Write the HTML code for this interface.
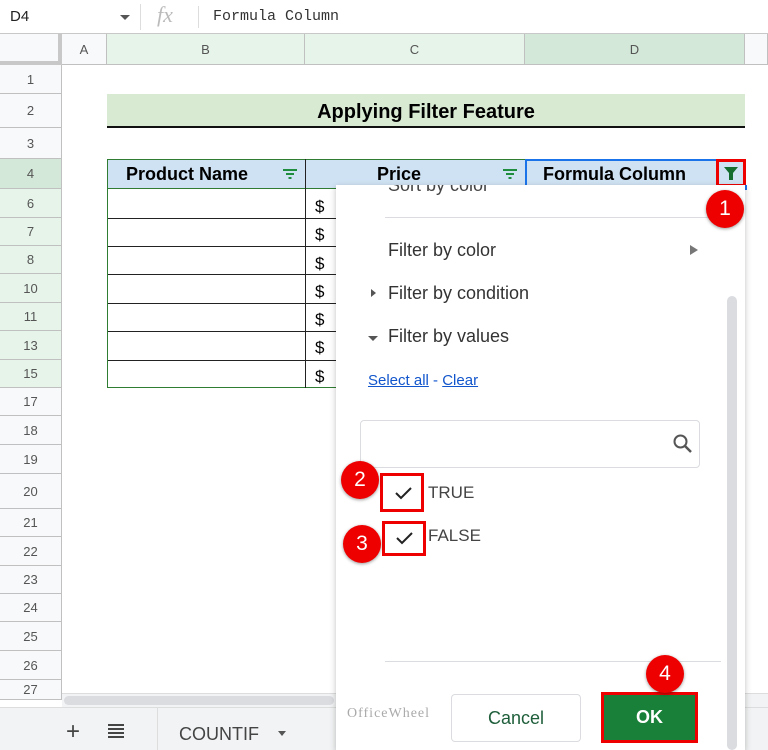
<!DOCTYPE html>
<html><head><style>
*{box-sizing:border-box;margin:0;padding:0}
body{width:768px;height:750px;overflow:hidden;background:#fff;font-family:"Liberation Sans",Arial,sans-serif;position:relative}
.a{position:absolute}
.rh{position:absolute;left:0;width:62px;background:#f8f9fa;border-bottom:1px solid #c0c0c0;border-right:1px solid #c0c0c0;color:#555;font-size:13px;display:flex;align-items:center;justify-content:center}
.ch{position:absolute;top:34px;height:31px;background:#f8f9fa;border-right:1px solid #c0c0c0;border-bottom:1px solid #c0c0c0;color:#555;font-size:13px;display:flex;align-items:center;justify-content:center}
.cell{position:absolute;border:1px solid #222;border-top:none;height:29px;font-size:16px;padding-left:8px;line-height:28px}
.badge{position:absolute;width:38px;height:38px;border-radius:50%;background:#e00;color:#fff;font-size:21px;display:flex;align-items:center;justify-content:center;box-shadow:0 1px 3px rgba(0,0,0,.4)}
.mi{position:absolute;left:388px;font-size:18px;color:#333}
</style></head><body>
<!-- formula bar -->
<div class="a" style="left:0;top:0;width:768px;height:34px;border-bottom:1px solid #c8c8c8;background:#fff"></div>
<div class="a" style="left:10px;top:8px;font-size:15px;color:#222">D4</div>
<div class="a" style="left:120px;top:15px;border-left:5px solid transparent;border-right:5px solid transparent;border-top:5px solid #555"></div>
<div class="a" style="left:140px;top:4px;width:1px;height:26px;background:#ddd"></div>
<div class="a" style="left:157px;top:2px;font-family:'Liberation Serif',serif;font-style:italic;font-size:22px;color:#bbb">fx</div>
<div class="a" style="left:198px;top:6px;width:1px;height:22px;background:#ddd"></div>
<div class="a" style="left:213px;top:8px;font-family:'Liberation Mono',monospace;font-size:15px;color:#333">Formula Column</div>
<!-- column headers -->
<div class="ch" style="left:0;width:62px;border-right:4px solid #c8c8c8;border-bottom:4px solid #c8c8c8"></div>
<div class="ch" style="left:62px;width:45px">A</div>
<div class="ch" style="left:107px;width:198px;background:#e6f4ea">B</div>
<div class="ch" style="left:305px;width:220px;background:#e6f4ea">C</div>
<div class="ch" style="left:525px;width:220px;background:#d3e8d9">D</div>
<div class="ch" style="left:745px;width:23px"></div>
<!-- row headers -->
<div class="rh" style="top:65px;height:29px">1</div>
<div class="rh" style="top:94px;height:34px">2</div>
<div class="rh" style="top:128px;height:31px">3</div>
<div class="rh" style="top:159px;height:30px;background:#d3e8d9">4</div>
<div class="rh" style="top:189px;height:29px;background:#e6f4ea">6</div>
<div class="rh" style="top:218px;height:28px;background:#e6f4ea">7</div>
<div class="rh" style="top:246px;height:28px;background:#e6f4ea">8</div>
<div class="rh" style="top:274px;height:29px;background:#e6f4ea">10</div>
<div class="rh" style="top:303px;height:28px;background:#e6f4ea">11</div>
<div class="rh" style="top:331px;height:29px;background:#e6f4ea">13</div>
<div class="rh" style="top:360px;height:28px;background:#e6f4ea">15</div>
<div class="rh" style="top:388px;height:28px">17</div>
<div class="rh" style="top:416px;height:29px">18</div>
<div class="rh" style="top:445px;height:29px">19</div>
<div class="rh" style="top:474px;height:35px">20</div>
<div class="rh" style="top:509px;height:28px">21</div>
<div class="rh" style="top:537px;height:29px">22</div>
<div class="rh" style="top:566px;height:28px">23</div>
<div class="rh" style="top:594px;height:28px">24</div>
<div class="rh" style="top:622px;height:29px">25</div>
<div class="rh" style="top:651px;height:29px">26</div>
<div class="rh" style="top:680px;height:20px">27</div>
<!-- title -->
<div class="a" style="left:107px;top:94px;width:638px;height:34px;background:#d9ead3;border-bottom:2px solid #111;text-align:center;font-weight:bold;font-size:20px;line-height:36px">Applying Filter Feature</div>
<!-- table header -->
<div class="a" style="left:107px;top:159px;width:638px;height:30px;background:#cfe2f3;border:1px solid #2e7d32"></div>
<div class="a" style="left:305px;top:159px;width:1px;height:30px;background:#222"></div>
<div class="a" style="left:525px;top:159px;width:220px;height:30px;border:2px solid #1a73e8"></div>
<div class="a" style="left:126px;top:164px;font-weight:bold;font-size:18px">Product Name</div>
<div class="a" style="left:377px;top:164px;font-weight:bold;font-size:18px">Price</div>
<div class="a" style="left:543px;top:164px;font-weight:bold;font-size:18px">Formula Column</div>
<svg class="a" style="left:282px;top:168px" width="16" height="12"><path d="M1 2H15M4 6H12M6.5 10H9.5" stroke="#1e8e3e" stroke-width="2"/></svg>
<svg class="a" style="left:502px;top:168px" width="16" height="12"><path d="M1 2H15M4 6H12M6.5 10H9.5" stroke="#1e8e3e" stroke-width="2"/></svg>
<div class="a" style="left:716px;top:159px;width:30px;height:28px;border:3px solid #e00"></div>
<svg class="a" style="left:723px;top:166px" width="16" height="16"><path d="M1 1H15L10 7V14H6V7Z" fill="#146c2e"/></svg>
<div class="a" style="left:742px;top:185px;width:5px;height:5px;background:#1a73e8"></div>
<!-- data rows -->
<div class="a" style="left:107px;top:189px;width:638px;height:199px;border:1px solid #2e7d32;border-top:none"></div>
<div class="a" style="left:305px;top:189px;width:1px;height:199px;background:#222"></div>
<div class="a" style="left:108px;top:218px;width:228px;height:1px;background:#222"></div>
<div class="a" style="left:108px;top:246px;width:228px;height:1px;background:#222"></div>
<div class="a" style="left:108px;top:274px;width:228px;height:1px;background:#222"></div>
<div class="a" style="left:108px;top:303px;width:228px;height:1px;background:#222"></div>
<div class="a" style="left:108px;top:331px;width:228px;height:1px;background:#222"></div>
<div class="a" style="left:108px;top:360px;width:228px;height:1px;background:#222"></div>
<div class="a" style="left:315px;top:193px;font-size:17px;line-height:28.3px">$<br>$<br>$<br>$<br>$<br>$<br>$</div>
<!-- bottom bars -->
<div class="a" style="left:62px;top:693px;width:706px;height:14px;background:#f1f3f4;border-top:1px solid #ddd"></div>
<div class="a" style="left:64px;top:696px;width:270px;height:9px;background:#dadce0;border-radius:5px"></div>
<div class="a" style="left:0;top:707px;width:768px;height:43px;background:#f1f3f4;border-top:1px solid #ddd"></div>
<div class="a" style="left:66px;top:718px;font-size:24px;color:#444">+</div>
<div class="a" style="left:108px;top:724px;width:16px;height:2px;background:#444;box-shadow:0 4px 0 #444,0 8px 0 #444,0 12px 0 #444"></div>
<div class="a" style="left:157px;top:707px;width:150px;height:43px;border-left:1px solid #ddd"></div>
<div class="a" style="left:179px;top:724px;font-size:18px;color:#444">COUNTIF</div>
<div class="a" style="left:278px;top:731px;border-left:4px solid transparent;border-right:4px solid transparent;border-top:5px solid #555"></div>
<!-- popup -->
<div class="a" style="left:336px;top:185px;width:409px;height:565px;background:#fff;box-shadow:0 2px 6px rgba(0,0,0,.25)"></div>
<div class="a" style="left:388px;top:185px;width:330px;height:10px;overflow:hidden"><div style="margin-top:-10px;font-size:18px;color:#444">Sort by color</div></div>
<div class="a" style="left:385px;top:217px;width:335px;height:1px;background:#dadce0"></div>
<div class="mi" style="top:240px">Filter by color</div>
<div class="a" style="left:690px;top:245px;border-top:5px solid transparent;border-bottom:5px solid transparent;border-left:8px solid #777"></div>
<div class="a" style="left:371px;top:289px;border-top:4px solid transparent;border-bottom:4px solid transparent;border-left:5px solid #555"></div>
<div class="mi" style="top:283px">Filter by condition</div>
<div class="a" style="left:368px;top:336px;border-left:5px solid transparent;border-right:5px solid transparent;border-top:5px solid #555"></div>
<div class="mi" style="top:326px">Filter by values</div>
<div class="a" style="left:368px;top:372px;font-size:15px;color:#1155cc"><u>Select all</u> - <u>Clear</u></div>
<div class="a" style="left:360px;top:420px;width:340px;height:48px;border:1px solid #dadce0;border-radius:4px"></div>
<svg class="a" style="left:672px;top:433px" width="22" height="22"><circle cx="8.5" cy="8.5" r="6" fill="none" stroke="#555" stroke-width="2"/><path d="M13 13L19 19" stroke="#555" stroke-width="2.5"/></svg>
<div class="a" style="left:727px;top:296px;width:10px;height:454px;background:#dadce0;border-radius:5px"></div>
<div class="a" style="left:380px;top:473px;width:44px;height:39px;border:3px solid #e00"></div>
<svg class="a" style="left:394px;top:485px" width="20" height="16"><path d="M2 8L7 13L17 3" fill="none" stroke="#222" stroke-width="2"/></svg>
<div class="a" style="left:428px;top:483px;font-size:17px;color:#444">TRUE</div>
<div class="a" style="left:382px;top:521px;width:44px;height:35px;border:3px solid #e00"></div>
<svg class="a" style="left:395px;top:530px" width="20" height="16"><path d="M2 8L7 13L17 3" fill="none" stroke="#222" stroke-width="2"/></svg>
<div class="a" style="left:428px;top:526px;font-size:17px;color:#444">FALSE</div>
<div class="a" style="left:385px;top:661px;width:336px;height:1px;background:#dadce0"></div>
<div class="a" style="left:451px;top:694px;width:130px;height:48px;border:1px solid #dadce0;border-radius:4px;text-align:center;line-height:46px;font-size:18px;color:#1e5e3a">Cancel</div>
<div class="a" style="left:601px;top:692px;width:97px;height:51px;border:3px solid #e00;background:#188038;color:#fff;font-weight:bold;font-size:18px;text-align:center;line-height:45px">OK</div>
<div class="a" style="left:347px;top:706px;font-family:'Liberation Serif',serif;font-size:14px;color:#aaa;letter-spacing:1px">OfficeWheel</div>
<!-- badges -->
<div class="badge" style="left:706px;top:190px">1</div>
<div class="badge" style="left:341px;top:461px">2</div>
<div class="badge" style="left:343px;top:525px">3</div>
<div class="badge" style="left:646px;top:655px">4</div>
</body></html>
